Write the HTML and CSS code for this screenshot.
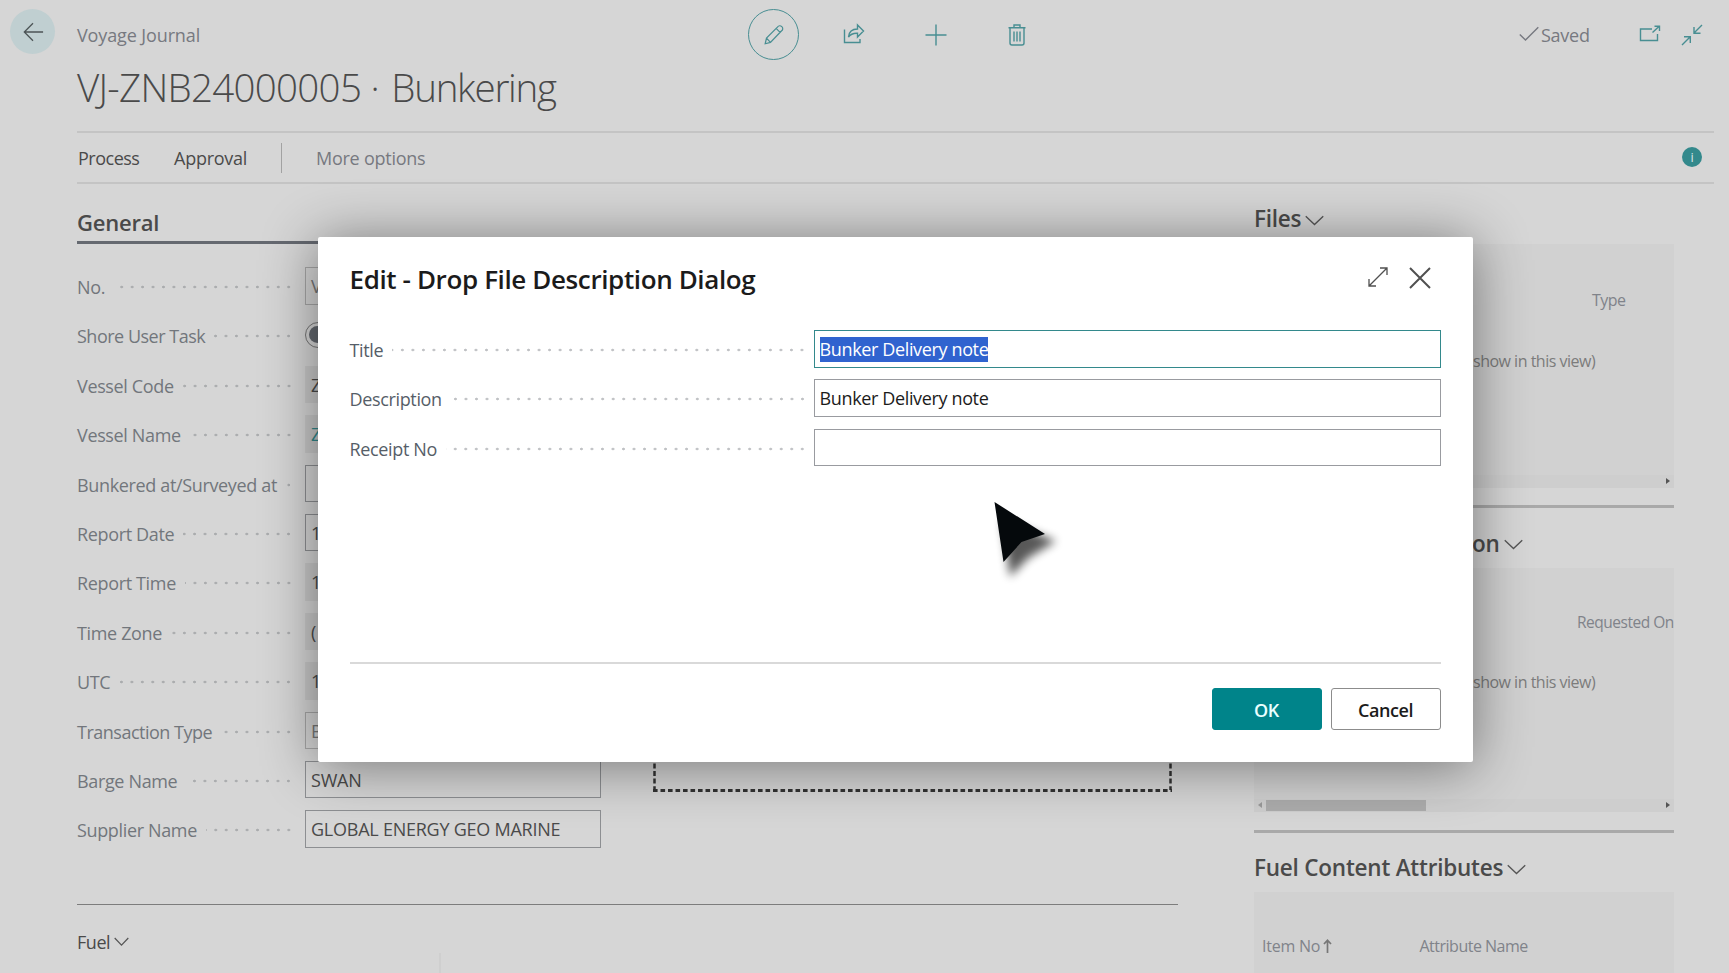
FILE: index.html
```html
<!DOCTYPE html>
<html lang="en">
<head>
<meta charset="utf-8">
<title>Voyage Journal</title>
<link rel="stylesheet" href="styles.css">
</head>
<body>
<div class="page">
  <header class="topbar">
    <div class="crumb">
      <span class="back"><svg width="24" height="24" viewBox="0 0 24 24"><path d="M23 12H3M12 2.500L2.500 12L12 21.500"/></svg></span>
      <span class="crumb-text">Voyage Journal</span>
    </div>
    <nav class="tools">
      <span class="edit"><svg width="24" height="24" viewBox="0 0 24 24"><path d="M2.500 22L4 15.500L16.500 3C18 1 20 1 21.500 2.500C23 4 23 6 21 7.500L8.500 20.500L2.500 22ZM4 15.500L8.500 20.500M15 4.500L19.500 9"/></svg></span>
      <svg width="22" height="22" viewBox="0 0 22 22"><path d="M1.500 5.500V18.500H17V15M5.500 13C6 7.500 9 5 14.500 5V1L20.500 7L14.500 13V9.200C10.500 9 7.500 10 5.500 13Z"/></svg>
      <svg width="22" height="22" viewBox="0 0 22 22"><path d="M11 .5V21.500M.5 11H21.500"/></svg>
      <svg width="22" height="22" viewBox="0 0 22 22"><path d="M2.500 3.700H19.500M8 3.500V1H14V3.500M4 4V19Q4 21 6 21H16Q18 21 18 19V4M8 7.500V17.500M11 7.500V17.500M14 7.500V17.500"/></svg>
    </nav>
    <div class="status">
      <svg class="check" width="20" height="16" viewBox="0 0 20 16"><path d="M.8 8.500L6.500 14L19.300 1.200"/></svg>
      <span class="saved">Saved</span>
      <svg class="popout" width="22" height="17" viewBox="0 0 22 17"><path d="M13 4H1.500V15.500H18.500V9M13.500 7.500L20.500 1M15.500 1.200H20.500V6"/></svg>
      <svg class="collapse" width="22" height="22" viewBox="0 0 22 22"><path d="M21 1L13 9M13 3V9.300H19.500M1 21L9 13M3 12.700H9.300V19"/></svg>
    </div>
  </header>
  <h1 class="title">VJ-ZNB24000005 · <span>Bunkering</span></h1>
  <div class="actions">
    <span class="process">Process</span>
    <span class="approval">Approval</span>
    <span class="sep"></span>
    <span class="more">More options</span>
    <span class="info">i</span>
  </div>
  <div class="content">
    <main class="main">
      <h2 class="section">General</h2>
      <div class="columns">
        <div class="fields">
          <div class="row"><span>No.</span><i></i><b class="box dim">V</b></div>
          <div class="row"><span class="tight">Shore User Task</span><i></i><b class="toggle"></b></div>
          <div class="row"><span>Vessel Code</span><i></i><b class="box fill">Z</b></div>
          <div class="row"><span>Vessel Name</span><i></i><b class="box fill link">Z</b></div>
          <div class="row"><span>Bunkered at/Surveyed at</span><i></i><b class="box"></b></div>
          <div class="row"><span>Report Date</span><i></i><b class="box">1</b></div>
          <div class="row"><span>Report Time</span><i></i><b class="box fill">1</b></div>
          <div class="row"><span>Time Zone</span><i></i><b class="box fill">(</b></div>
          <div class="row"><span>UTC</span><i></i><b class="box fill">1</b></div>
          <div class="row"><span class="tight">Transaction Type</span><i></i><b class="box dim">B</b></div>
          <div class="row"><span>Barge Name</span><i></i><b class="box caps">SWAN</b></div>
          <div class="row"><span>Supplier Name</span><i></i><b class="box caps">GLOBAL ENERGY GEO MARINE</b></div>
        </div>
        <svg class="drop" width="520" height="60" viewBox="0 0 520 60"><path class="side" d="M1.500 0V57M517.500 0V57"/><path class="base" d="M0 57.500H519"/></svg>
      </div>
      <div class="fuel"><span>Fuel</span><svg width="15" height="10" viewBox="0 0 15 10"><path d="M.7 1L7.500 8.200L14.300 1"/></svg></div>
      <div class="grid-edge"></div>
    </main>
    <aside class="side-pane">
      <section class="fact">
        <h3><span>Files</span><svg width="20" height="11" viewBox="0 0 20 11"><path d="M.8 1L10 9.800L19.200 1"/></svg></h3>
        <div class="panel">
          <span class="col type">Type</span>
          <span class="empty">show in this view)</span>
          <div class="scroll"><em class="r"></em></div>
        </div>
      </section>
      <section class="fact">
        <h3 class="covered"><span>on</span><svg width="20" height="11" viewBox="0 0 20 11"><path d="M.8 1L10 9.800L19.200 1"/></svg></h3>
        <div class="panel">
          <span class="col requested">Requested On</span>
          <span class="empty second">show in this view)</span>
          <div class="scroll"><em class="l"></em><u></u><em class="r"></em></div>
        </div>
      </section>
      <section class="fact last">
        <h3><span>Fuel Content Attributes</span><svg width="20" height="11" viewBox="0 0 20 11"><path d="M.8 1L10 9.800L19.200 1"/></svg></h3>
        <div class="panel heads">
          <span class="item">Item No</span><svg width="9" height="14" viewBox="0 0 9 14"><path d="M4.500 14V1.500M1 5L4.500 1.200L8 5"/></svg>
          <span class="attr">Attribute Name</span>
        </div>
      </section>
    </aside>
  </div>
</div>

<div class="dialog">
  <div class="dialog-head">
    <h2>Edit - Drop File Description Dialog</h2>
    <svg class="expand" width="20" height="20" viewBox="0 0 20 20"><path d="M1 19L19 1M12 1H19V8M1 12V19H8"/></svg>
    <svg class="close" width="22" height="22" viewBox="0 0 22 22"><path d="M1 1L21 21M21 1L1 21"/></svg>
  </div>
  <div class="dialog-body">
    <div class="row"><span>Title</span><i></i><b class="box focus"><mark>Bunker Delivery note</mark></b></div>
    <div class="row"><span>Description</span><i></i><b class="box">Bunker Delivery note</b></div>
    <div class="row"><span>Receipt No</span><i></i><b class="box"></b></div>
  </div>
  <div class="dialog-foot">
    <button class="btn primary">OK</button>
    <button class="btn">Cancel</button>
  </div>
</div>
<svg class="cursor" width="90" height="100" viewBox="0 0 90 100"><path class="shade" d="M22 30L76 51L48 68L30 87Z"/><path d="M14.500 12L65 44L41.500 52L23.500 72Z"/></svg>
</body>
</html>
```
FILE: styles.css
```css
* { box-sizing: border-box; }
body {
  margin: 0; width: 1729px; height: 973px; overflow: hidden; position: relative;
  background: #d6d6d6; color: #4a4a4a;
  font-family: "Open Sans", "Noto Sans", sans-serif; font-size: 18px; line-height: 24px;
  letter-spacing: -.25px; white-space: nowrap;
}
h1, h2, h3 { margin: 0; }
svg { display: block; flex: none; fill: none; stroke: #488e92; stroke-width: 1.4; overflow: visible; }
i, b, em, u { font-style: normal; font-weight: 400; text-decoration: none; }
.page { height: 973px; overflow: hidden; }

.topbar { height: 69px; display: grid; grid-template-columns: 748px 1fr 210px; align-items: start; }
.crumb { display: flex; padding: 9px 0 0 10px; gap: 22px; }
.back { width: 45px; height: 45px; border-radius: 50%; background: #c0cfd1; display: flex; align-items: center; justify-content: center; }
.back svg { stroke: #4c5456; width: 22px; }
.crumb-text { color: #777980; margin-top: 14px; letter-spacing: -.12px; }
.tools { display: flex; align-items: center; padding-top: 9px; gap: 59.500px; }
.tools .edit { width: 51px; height: 51px; border: 1.4px solid #488e92; border-radius: 50%; display: flex; align-items: center; justify-content: center; margin-right: -15.500px; }
.tools .edit svg { width: 21px; height: 22px; }
.status { display: flex; align-items: flex-start; color: #777980; }
.check { margin-top: 26px; stroke: #777980; }
.saved { margin: 23px 0 0 2px; width: 98px; }
.popout { margin-top: 25px; }
.collapse { margin: 24px 0 0 20px; }

.title { margin-left: 77px; height: 62px; font-size: 38.500px; font-weight: 300; line-height: 37px; letter-spacing: -.7px; }
.title span { letter-spacing: -1.250px; margin-left: 3px; }
.actions { margin: 0 15px 0 77px; height: 53px; border-top: 2px solid #c4c4c4; border-bottom: 2px solid #c4c4c4; display: flex; align-items: center; padding: 0 12px 0 1px; }
.process { width: 96px; letter-spacing: -.5px; }
.approval { width: 107px; }
.sep { width: 1px; height: 30px; background: #a2a2a2; margin-right: 34px; }
.more { color: #777980; flex: 1; }
.info { width: 20px; height: 20px; border-radius: 50%; background: #33898c; color: #d6e6e6; text-align: center; font-size: 13px; line-height: 20px; margin-top: -1px; }

.content { display: flex; height: 789px; }
.main { width: 1101px; margin-left: 77px; flex: none; }
.section { height: 60px; padding-top: 26px; border-bottom: 3px solid #656970; font-size: 22px; font-weight: 600; letter-spacing: -.2px; }
.columns { height: 661px; border-bottom: 1.500px solid #7d7d7d; display: flex; gap: 52px; align-items: flex-start; }
.fields { width: 524px; padding-top: 23px; display: grid; grid-auto-rows: 49.400px; }
.row { display: flex; align-items: flex-start; }
.row > span { color: #72767c; line-height: 40px; letter-spacing: -.35px; }
.row > .tight { letter-spacing: -.5px; }
.row > i { flex: 1; height: 38px; margin: 1px 11px 0 9px; background: radial-gradient(circle, #aaacae 1px, transparent 1.700px) right center / 10.450px 10px repeat-x; }
.box { width: 296px; height: 37.500px; flex: none; border: 1.500px solid #8d8f92; line-height: 37px; padding-left: 5px; }
.box.dim { border-color: #a7a7a7; color: #777; }
.box.fill { border-color: transparent; background: #cacaca; }
.box.link { color: #33898c; }
.box.caps { letter-spacing: -.24px; }
.toggle { width: 296px; flex: none; height: 26px; margin-top: 6px; border: 1.500px solid #777; border-radius: 14px; }
.toggle::before { content: ""; display: block; width: 17px; height: 17px; margin: 3px; border-radius: 50%; background: #656970; }
.drop { margin-top: 488.500px; stroke: #333; }
.drop .side { stroke-width: 2.500; stroke-dasharray: 5 2.600; }
.drop .base { stroke-width: 3; stroke-dasharray: 4.600 2.900; }
.fuel { display: flex; align-items: center; gap: 4px; height: 48px; padding-top: 25px; letter-spacing: -.45px; }
.fuel svg { stroke: #555; stroke-width: 1.200; margin-top: 1px; }
.grid-edge { height: 20px; margin-left: 362px; border-left: 2px solid #cfcfcf; }

.side-pane { width: 420px; margin-left: 76px; }
.fact { height: 324.400px; border-bottom: 3px solid #a9a9a9; }
.fact h3 { height: 59.500px; padding-top: 11px; display: flex; align-items: center; gap: 4px; font-size: 22.500px; font-weight: 600; letter-spacing: -.22px; }
.fact h3 svg { stroke: #555; margin-top: 2px; width: 19px; }
.covered { padding-left: 218px; }
.panel { height: 244px; background: #d1d1d1; display: flex; flex-direction: column; overflow: hidden; font-size: 16px; color: #80838a; letter-spacing: -.5px; }
.type { margin: 44.500px 0 0 338px; }
.requested { margin: 42px 0 0 323px; font-size: 15.500px; letter-spacing: -.48px; }
.empty { margin: 37px 0 0 219px; color: #7c7c7c; flex: 1; }
.empty.second { margin-top: 36px; }
.scroll { height: 13px; background: #cecece; display: flex; align-items: center; padding: 0 4px; }
.scroll .r { margin-left: auto; border: 3.500px solid transparent; border-left: 4px solid #555; border-right: 0; }
.scroll .l { border: 3.500px solid transparent; border-right: 4px solid #999; border-left: 0; }
.scroll u { width: 160px; height: 11px; margin-left: 4px; background: #acacac; }
.last { border: 0; }
.heads { flex-direction: row; padding: 42px 0 0 8px; }
.heads svg { stroke: #777; margin: 5px 0 0 5px; stroke-width: 1.700; }
.heads .item { width: 56px; letter-spacing: -.25px; }
.heads .attr { margin-left: 87.500px; }

.dialog {
  position: absolute; left: 318px; top: 237px; width: 1154.500px; height: 524.500px; padding: 0 32px 0 31.500px;
  background: #fff; border-radius: 2px; box-shadow: 0 4px 56px rgba(0, 0, 0, .46); color: #1b1b1b;
}
.dialog-head { height: 93px; display: flex; align-items: flex-start; padding: 30px 10px 0 0; }
.dialog-head h2 { flex: 1; font-size: 26px; line-height: 24px; font-weight: 600; letter-spacing: -.38px; }
.dialog-head svg { stroke: #505050; }
.expand { margin: 0 21px 0 0; stroke-width: 1.300; }
.close { stroke-width: 2; }
.dialog-body { height: 334px; border-bottom: 2px solid #d9d9d9; display: grid; grid-auto-rows: 49.400px; }
.dialog-body .row > span { color: #565e68; }
.dialog-body .row > i { margin-left: 9px; margin-right: 6px; background-size: 10.530px 10px; background-image: radial-gradient(circle, #bfc1c4 1px, transparent 1.700px); }
.dialog-body .box { width: 627px; border-color: #999ba0; letter-spacing: -.36px; }
.dialog-body .focus { border-color: #33898c; }
mark { display: inline-block; background: #3063cf; color: #fff; line-height: 25px; height: 25px; }
.dialog-foot { display: flex; justify-content: flex-end; gap: 9px; padding-top: 24px; }
.btn { width: 110px; height: 42px; border: 1.500px solid #8c8c8c; border-radius: 3px; background: #fff; color: #1b1b1b; font: 600 18px "Open Sans", "Noto Sans", sans-serif; letter-spacing: -.4px; padding: 1px 0 0; }
.btn.primary { background: #00848a; border-color: #00848a; color: #e9ffff; }
.cursor { position: absolute; left: 980px; top: 490px; fill: #05090c; stroke: none; }
.cursor .shade { fill: #000; opacity: .65; filter: blur(5px); }
```
